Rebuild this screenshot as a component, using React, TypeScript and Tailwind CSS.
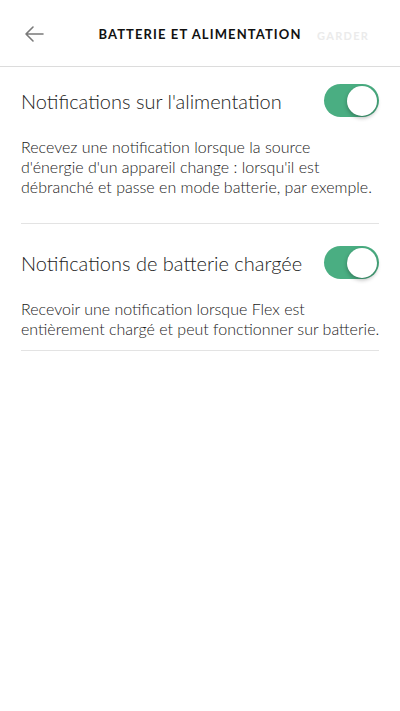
import React from "react";

function Toggle() {
  return (
    <div className="relative w-[55px] h-[33px] rounded-full bg-[#4aae82] shrink-0">
      <div className="absolute right-[2px] top-[2px] w-[30px] h-[30px] rounded-full bg-white shadow-[0_2px_4px_rgba(0,0,0,0.3)]" />
    </div>
  );
}

function Row({ title, lines, mb }: { title: string; lines: string[]; mb: string }) {
  return (
    <div className="border-b border-[#e3e3e3]">
      <div className="flex items-center justify-between h-[33px]">
        <span className="text-[20px] font-light text-[#222] leading-none">{title}</span>
        <Toggle />
      </div>
      <p className={`text-[16px] font-light leading-[20px] text-[#1a1a1a] mt-[20px] whitespace-nowrap ${mb}`}>
        {lines.map((l, i) => (
          <React.Fragment key={i}>
            {l}
            {i < lines.length - 1 && <br />}
          </React.Fragment>
        ))}
      </p>
    </div>
  );
}

export default function App() {
  return (
    <div className="w-[400px] h-[711px] bg-white" style={{ fontFamily: "Lato, 'Noto Sans', sans-serif" }}>
      <div className="relative h-[67px] border-b border-[#dcdcdc] flex items-center justify-center">
        <svg className="absolute left-[24px] top-[25px]" width="20" height="18" viewBox="0 0 20 18" fill="none" stroke="#7a7a7a" strokeWidth="1.6" strokeLinecap="round" strokeLinejoin="round">
          <path d="M19 9H2M9 2L2 9l7 7" />
        </svg>
        <span className="text-[13px] font-bold tracking-[1.1px] text-[#111] mt-[3px]">BATTERIE ET ALIMENTATION</span>
        <span className="absolute left-[317px] top-[28px] text-[11px] font-bold tracking-[1.3px] text-[#ebebeb]">GARDER</span>
      </div>
      <div className="px-[21px] pt-[17px]">
        <Row
          title="Notifications sur l'alimentation"
          lines={[
            "Recevez une notification lorsque la source",
            "d'énergie d'un appareil change : lorsqu'il est",
            "débranché et passe en mode batterie, par exemple.",
          ]}
          mb="mb-[26px]"
        />
      </div>
      <div className="px-[21px] pt-[22px]">
        <Row
          title="Notifications de batterie chargée"
          lines={[
            "Recevoir une notification lorsque Flex est",
            "entièrement chargé et peut fonctionner sur batterie.",
          ]}
          mb="mb-[11px]"
        />
      </div>
    </div>
  );
}
